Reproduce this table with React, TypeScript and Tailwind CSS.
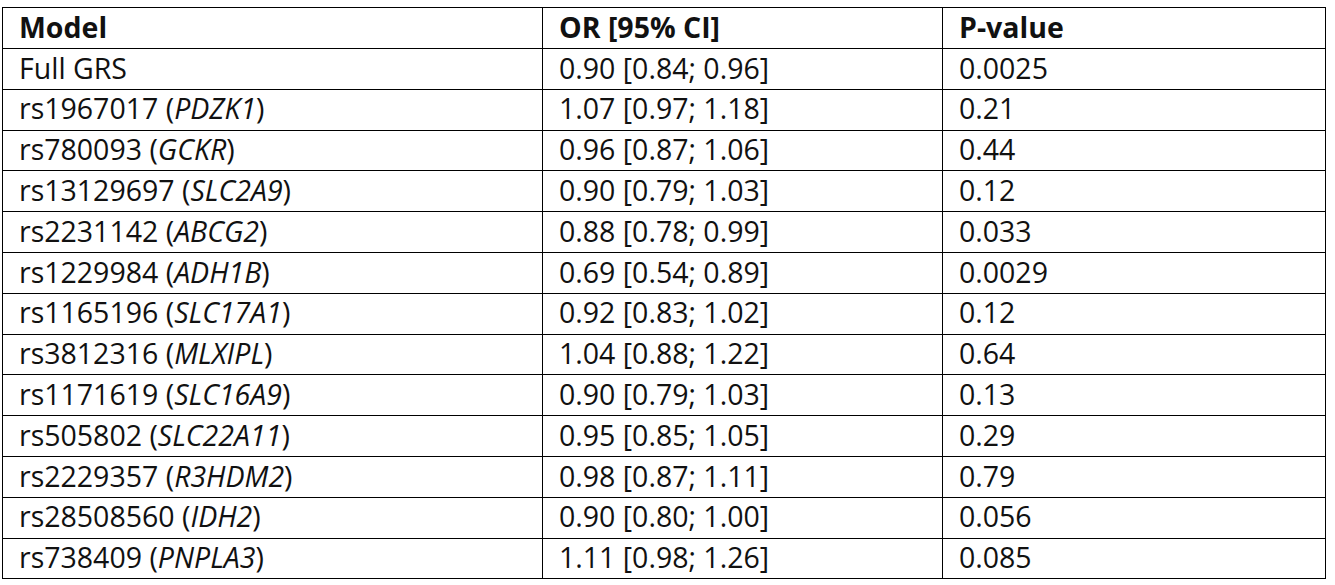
const rows: { snp: string; gene: string; or: string; p: string }[] = [
  { snp: "Full GRS", gene: "", or: "0.90 [0.84; 0.96]", p: "0.0025" },
  { snp: "rs1967017", gene: "PDZK1", or: "1.07 [0.97; 1.18]", p: "0.21" },
  { snp: "rs780093", gene: "GCKR", or: "0.96 [0.87; 1.06]", p: "0.44" },
  { snp: "rs13129697", gene: "SLC2A9", or: "0.90 [0.79; 1.03]", p: "0.12" },
  { snp: "rs2231142", gene: "ABCG2", or: "0.88 [0.78; 0.99]", p: "0.033" },
  { snp: "rs1229984", gene: "ADH1B", or: "0.69 [0.54; 0.89]", p: "0.0029" },
  { snp: "rs1165196", gene: "SLC17A1", or: "0.92 [0.83; 1.02]", p: "0.12" },
  { snp: "rs3812316", gene: "MLXIPL", or: "1.04 [0.88; 1.22]", p: "0.64" },
  { snp: "rs1171619", gene: "SLC16A9", or: "0.90 [0.79; 1.03]", p: "0.13" },
  { snp: "rs505802", gene: "SLC22A11", or: "0.95 [0.85; 1.05]", p: "0.29" },
  { snp: "rs2229357", gene: "R3HDM2", or: "0.98 [0.87; 1.11]", p: "0.79" },
  { snp: "rs28508560", gene: "IDH2", or: "0.90 [0.80; 1.00]", p: "0.056" },
  { snp: "rs738409", gene: "PNPLA3", or: "1.11 [0.98; 1.26]", p: "0.085" },
];

export default function App() {
  return (
    <div className="min-h-screen bg-white pl-[2px] pt-[7px] font-['Open_Sans',sans-serif] text-[28.5px] text-[#111]">
      <table className="w-[1323px] table-fixed border-collapse">
        <colgroup>
          <col className="w-[540px]" />
          <col className="w-[400px]" />
          <col className="w-[383px]" />
        </colgroup>
        <thead>
          <tr className="h-[41px]">
            <th className="border border-black px-4 pb-[2px] text-left font-bold leading-none">Model</th>
            <th className="border border-black px-4 pb-[2px] text-left font-bold leading-none">OR [95% CI]</th>
            <th className="border border-black px-4 pb-[2px] text-left font-bold leading-none">P-value</th>
          </tr>
        </thead>
        <tbody>
          {rows.map((r) => (
            <tr key={r.snp} className="h-[40.8px]">
              <td className="border border-black px-4 pb-[2px] leading-none">
                {r.gene ? (
                  <>
                    {r.snp} (<i>{r.gene}</i>)
                  </>
                ) : (
                  r.snp
                )}
              </td>
              <td className="border border-black px-4 pb-[2px] leading-none">{r.or}</td>
              <td className="border border-black px-4 pb-[2px] leading-none">{r.p}</td>
            </tr>
          ))}
        </tbody>
      </table>
    </div>
  );
}
